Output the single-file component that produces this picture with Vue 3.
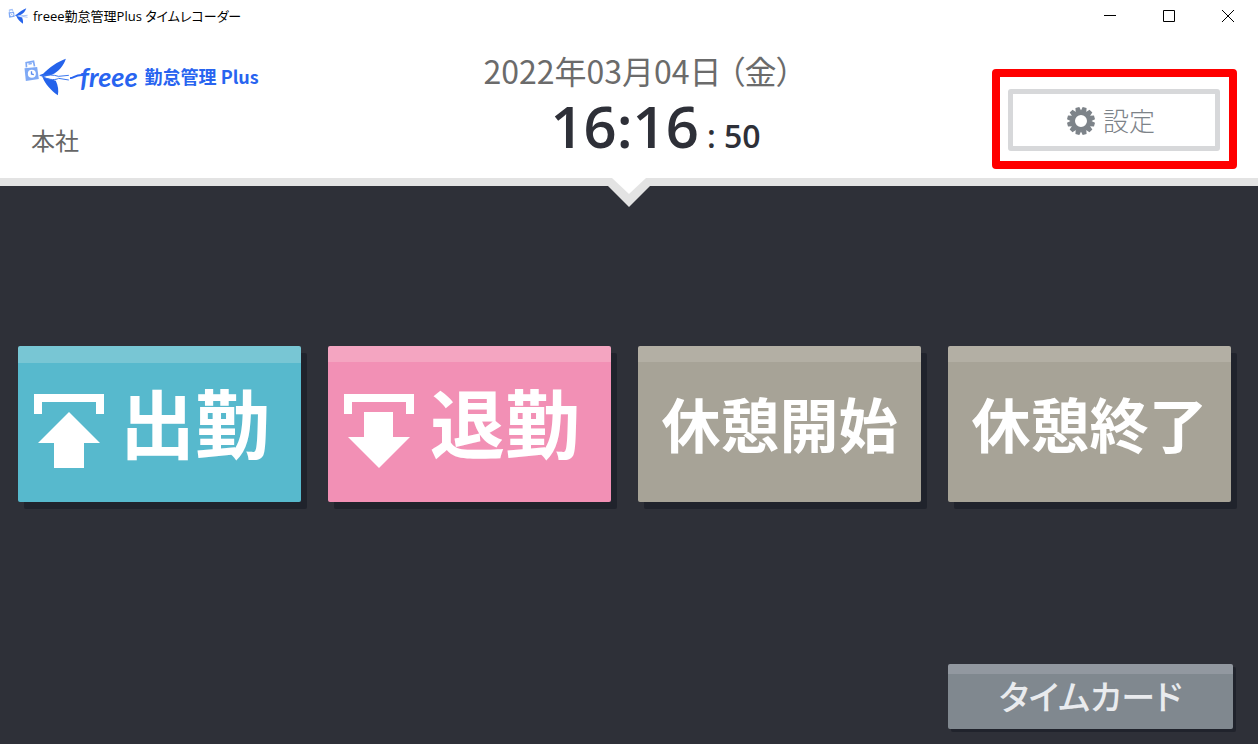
<script setup>
const office = '本社'
const date = '2022年03月04日 （金）'
const time = '16:16'
const seconds = '50'

const actions = [
  { id: 'in', label: '出勤', tone: 'teal', arrow: 'M35 18 L66 49 H50 V74 H20 V49 H4 Z' },
  { id: 'out', label: '退勤', tone: 'pink', arrow: 'M20 18 H49 V43 H66 L35 74 L4 43 H20 Z' },
  { id: 'break-start', label: '休憩開始', tone: 'stone' },
  { id: 'break-end', label: '休憩終了', tone: 'stone' },
]

const teeth = Array.from({ length: 12 }, (_, i) => i * 30)
</script>

<template>
  <div class="window">
    <svg class="defs" width="0" height="0" aria-hidden="true">
      <symbol id="bird" viewBox="0 0 140 114">
        <g fill="none" stroke="#7fa9f5" stroke-width="5">
          <path d="M10 28 L9 14 L31 10 L34 25" />
          <path d="M16 18 L26 17" stroke-width="4" />
        </g>
        <path fill="#7fa9f5" d="M4 31 L42 27 L47 63 L8 69 Z" />
        <circle cx="26" cy="47" r="12" fill="#fff" />
        <path d="M25 40 V48 L32 50" fill="none" stroke="#5b8def" stroke-width="4" />
        <path
          fill="#2563eb"
          d="M128 2 C104 10 78 29 60 47 L48 52 L60 57 L86 50 C108 40 122 22 128 2 Z"
        />
        <path fill="#2563eb" d="M58 56 C66 80 84 96 104 112 C107 98 105 83 98 68 L78 62 Z" />
        <path fill="#fff" d="M68 55 L99 53 L116 59 L88 61 Z" />
        <path
          d="M52 53 C75 50 91 50 106 55 L137 52 M58 57 C82 67 98 66 106 61 L137 66"
          fill="none"
          stroke="#3b78ef"
          stroke-width="3"
        />
      </symbol>
    </svg>

    <div class="titlebar">
      <svg class="app-icon" aria-hidden="true"><use href="#bird" /></svg>
      <span class="title">freee勤怠管理Plus タイムレコーダー</span>
      <div class="controls">
        <button type="button" aria-label="最小化">
          <svg viewBox="0 0 12 12"><path d="M0 5.5 H12" /></svg>
        </button>
        <button type="button" aria-label="最大化">
          <svg viewBox="0 0 12 12"><path d="M.5 .5 H11.5 V11.5 H.5 Z" /></svg>
        </button>
        <button type="button" aria-label="閉じる">
          <svg viewBox="0 0 12 12"><path d="M0 0 L12 12 M12 0 L0 12" /></svg>
        </button>
      </div>
    </div>

    <header class="header">
      <div class="brand">
        <div class="logo">
          <svg class="logo-bird" aria-hidden="true"><use href="#bird" /></svg>
          <svg class="swash" viewBox="0 0 14 12" aria-hidden="true">
            <path d="M0 7 C3 8 5 3 14 4" />
          </svg>
          <span class="freee">freee</span>
          <span class="product">勤怠管理 Plus</span>
        </div>
        <div class="office">{{ office }}</div>
      </div>

      <div class="clock">
        <div class="date">{{ date }}</div>
        <div class="time">
          <span class="hm">{{ time }}</span>
          <span class="sec">: {{ seconds }}</span>
        </div>
      </div>

      <div class="highlight">
        <button type="button" class="settings">
          <svg class="gear" viewBox="-14 -14 28 28" aria-hidden="true">
            <path
              v-for="angle in teeth"
              :key="angle"
              d="M-3 -9 L-2 -14 H2 L3 -9 Z"
              :transform="`rotate(${angle + 15})`"
            />
            <circle r="8" />
          </svg>
          <span>設定</span>
        </button>
      </div>

      <svg class="notch" viewBox="0 0 42 30" aria-hidden="true">
        <path fill="#e3e3e3" d="M0 0 H42 V8 L21 29 L0 8 Z" />
        <path fill="#fff" d="M4 0 H38 L21 16 Z" />
      </svg>
    </header>

    <main class="main">
      <div class="actions">
        <button
          v-for="action in actions"
          :key="action.id"
          type="button"
          :class="['tile', action.tone, { large: action.arrow }]"
        >
          <svg v-if="action.arrow" class="stamp" viewBox="0 0 70 74" aria-hidden="true">
            <path d="M0 0 H70 V20 H62 V8 H8 V20 H0 Z" />
            <path :d="action.arrow" />
          </svg>
          <span>{{ action.label }}</span>
        </button>
      </div>
      <button type="button" class="timecard">タイムカード</button>
    </main>
  </div>
</template>

<style>
body {
  margin: 0;
}
</style>

<style scoped>
.window {
  display: flex;
  flex-direction: column;
  min-height: 100vh;
  background: #fff;
  color: #2e3038;
  font-family: "Noto Sans CJK JP", sans-serif;
}

.defs {
  position: absolute;
}

button {
  margin: 0;
  padding: 0;
  border: 0;
  background: none;
  color: inherit;
  font-family: inherit;
  cursor: pointer;
}

.titlebar {
  display: flex;
  align-items: center;
  height: 32px;
  padding: 0 1px 0 8px;
  color: #000;
}

.app-icon {
  width: 20px;
  height: 18px;
}

.title {
  margin-left: 5px;
  font-family: "Open Sans", "Noto Sans CJK JP", sans-serif;
  font-size: 13px;
  line-height: 20px;
  font-feature-settings: "palt";
}

.controls {
  display: flex;
  align-self: stretch;
  margin-left: auto;
}

.controls button {
  display: flex;
  align-items: center;
  justify-content: center;
  width: 59px;
}

.controls svg {
  width: 12px;
  height: 12px;
  fill: none;
  stroke: #000;
}

.header {
  position: relative;
  display: grid;
  grid-template-columns: 1fr auto 1fr;
  height: 146px;
  border-bottom: 8px solid #e3e3e3;
}

.brand {
  padding: 24px 0 0 23px;
}

.logo {
  display: flex;
  align-items: center;
  height: 42px;
  color: #2864f0;
}

.logo-bird {
  width: 47px;
  height: 38px;
}

.swash {
  width: 14px;
  height: 12px;
  margin-right: -4px;
  fill: none;
  stroke: #2864f0;
  stroke-width: 2;
}

.freee {
  font: italic 700 27px/32px Lato, sans-serif;
}

.product {
  margin-left: 7px;
  padding-bottom: 2px;
  font-size: 18px;
  font-weight: 700;
  line-height: 24px;
}

.office {
  margin: 24px 0 0 8px;
  color: #666;
  font-size: 24px;
  line-height: 36px;
}

.clock {
  padding: 18px 0 0 18px;
}

.date {
  color: #6b6b6b;
  font-size: 32px;
  line-height: 40px;
  font-feature-settings: "palt";
}

.time {
  display: flex;
  align-items: baseline;
  gap: 8px;
  padding-left: 67px;
  font-family: "Open Sans", sans-serif;
  font-weight: 600;
  line-height: 72px;
}

.hm {
  font-size: 58px;
}

.sec {
  font-size: 32px;
}

.highlight {
  box-sizing: border-box;
  justify-self: end;
  align-self: start;
  width: 245px;
  margin: 37px 21px 0 0;
  padding: 12px 9px 10px 8px;
  border: 8px solid #f00;
  border-radius: 4px;
}

.settings {
  display: flex;
  align-items: center;
  justify-content: center;
  gap: 8px;
  box-sizing: border-box;
  width: 100%;
  height: 62px;
  padding-right: 6px;
  border: 5px solid #d7d8da;
  border-radius: 3px;
  color: #7d8389;
  font-size: 26px;
  font-weight: 300;
}

.settings span {
  padding-bottom: 2px;
}

.gear {
  width: 28px;
  height: 28px;
  margin-top: 2px;
  fill: #7d8389;
}

.gear circle {
  fill: none;
  stroke: #7d8389;
  stroke-width: 4;
}

.notch {
  position: absolute;
  top: 100%;
  left: 50%;
  width: 42px;
  height: 30px;
  transform: translateX(-50%);
}

.main {
  display: flex;
  flex: 1;
  flex-direction: column;
  justify-content: space-between;
  padding: 160px 27px 15px 18px;
  background: #2e3038;
}

.actions {
  display: grid;
  grid-template-columns: repeat(4, 1fr);
  gap: 27px;
}

.tile {
  display: flex;
  align-items: center;
  justify-content: center;
  box-sizing: border-box;
  height: 156px;
  padding-bottom: 2px;
  border-radius: 2px;
  box-shadow: 6px 7px 0 #20232c;
  color: #fff;
  font-size: 59px;
  font-weight: 700;
  line-height: 80px;
}

.tile.large {
  justify-content: flex-start;
  gap: 16px;
  padding: 0 0 6px 16px;
  font-size: 75px;
}

.stamp {
  width: 70px;
  height: 74px;
  margin-top: 20px;
  fill: #fff;
}

.teal {
  background: linear-gradient(#78c6d4 17px, #57b9cd 17px);
}

.pink {
  background: linear-gradient(#f4a5c1 16px, #f290b5 16px);
}

.stone {
  background: linear-gradient(#b3afa4 16px, #a7a397 16px);
}

.timecard {
  align-self: flex-end;
  width: 285px;
  height: 65px;
  margin-right: -2px;
  padding-bottom: 2px;
  border-radius: 2px;
  box-shadow: 3px 3px 0 #20232c;
  background: linear-gradient(#9298a0 10px, #80888f 10px);
  color: #e9ebee;
  font-size: 34px;
  font-weight: 500;
  line-height: 48px;
  font-feature-settings: "palt";
}
</style>
